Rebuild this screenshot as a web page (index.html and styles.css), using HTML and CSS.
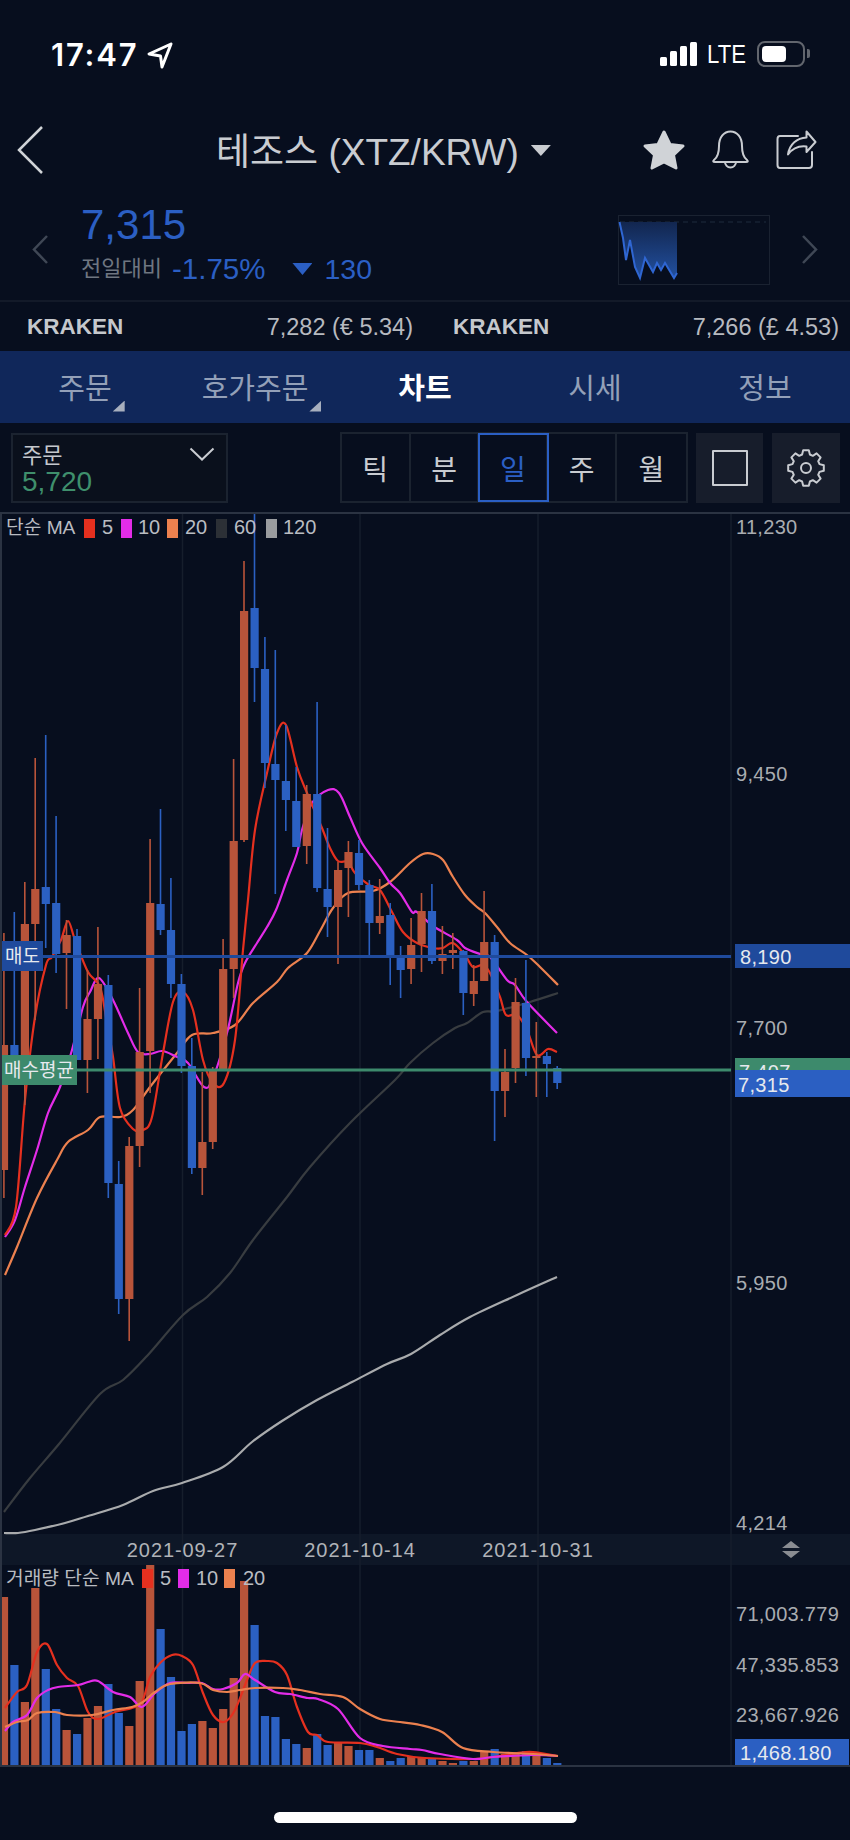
FILE: index.html
```html
<!DOCTYPE html>
<html lang="ko">
<head>
    <meta charset="UTF-8">
    <meta name="viewport" content="width=device-width, initial-scale=1.0">
    <title>테조스 (XTZ/KRW)</title>
    <link rel="stylesheet" href="styles.css">
</head>
<body>
    <!-- Status bar -->
    <div class="status">
        <span class="clock">17:47</span>
        <svg class="loc" width="28" height="28" viewBox="0 0 28 28"><path d="M25 3 L3 13 L14.500 15 L16 26 Z"/></svg>
        <svg class="signal" width="37" height="24" viewBox="0 0 37 24">
            <rect x="0" y="15" width="7" height="9" rx="1.500"/>
            <rect x="10" y="9" width="7" height="15" rx="1.500"/>
            <rect x="20" y="4" width="7" height="20" rx="1.500"/>
            <rect x="30" y="0" width="7" height="24" rx="1.500"/>
        </svg>
        <span class="net">LTE</span>
        <div class="battery"><div class="battery-level"></div></div>
        <div class="battery-cap"></div>
    </div>

    <!-- Title with favourite, alert and share actions -->
    <header class="title-row">
        <svg class="back" width="26" height="48" viewBox="0 0 26 48"><path d="M25 1 L2 24 L25 47"/></svg>
        <h1 class="title">테조스 (XTZ/KRW)</h1>
        <span class="caret"></span>
        <div class="actions">
            <svg width="44" height="42" viewBox="0 0 44 42"><path class="star" d="M22 3 L28 15.500 L41 17 L31.500 26 L34 39 L22 33 L10 39 L12.500 26 L3 17 L16 15.500 Z"/></svg>
            <svg width="40" height="40" viewBox="0 0 40 40"><path class="outline" d="M3 30 C7 27 8 22 8 16 C8 7 13 1.500 19.500 1.500 C26 1.500 31 7 31 16 C31 22 32 27 36 30 Q38 32 35 32 H4 Q1 32 3 30 Z M14 32 A5.500 5.500 0 0 0 25 32"/></svg>
            <svg width="41" height="40" viewBox="0 0 41 40"><path class="outline" d="M22 6 H4 Q1.500 6 1.500 9 V35 Q1.500 38 4 38 H33 Q36 38 36 35 V22 M30.500 1.500 L39.500 12 L30.500 22 V16.500 C22 15.500 16 19 12 24.500 C13.500 14 21 8 30.500 7.500 Z"/></svg>
        </div>
    </header>

    <!-- Current price and the day's sparkline -->
    <section class="price-row">
        <svg class="pager" width="17" height="29" viewBox="0 0 17 29"><path d="M15 1 L2 14.500 L15 28"/></svg>
        <div class="price-info">
            <div class="price">7,315</div>
            <div class="change">
                <span class="change-label">전일대비</span>
                <span class="change-rate">-1.75%</span>
                <span class="change-arrow"></span>
                <span class="change-amount">130</span>
            </div>
        </div>
        <svg class="spark" width="152" height="70" viewBox="618 215 152 70">
            <defs>
                <linearGradient id="sparkFill" x1="0" y1="0" x2="0" y2="1">
                    <stop offset="0" stop-color="#12264f"/>
                    <stop offset="1" stop-color="#22509f"/>
                </linearGradient>
            </defs>
            <rect class="spark-box" x="618.500" y="215.500" width="151" height="69"/>
            <line class="spark-open" x1="620" y1="222" x2="766" y2="222"/>
            <path fill="url(#sparkFill)" d="M619.500 222 H677 V273 L674 278 L665 263 L661 270 L657 263 L653 272 L645 258 L640 278 L635 267 L630 240 L626 260 L623 238 Z"/>
            <polyline class="spark-line" points="619.500,222 623,238 626,260 630,240 635,267 640,278 645,258 653,272 657,263 661,270 665,263 674,278 677,273"/>
        </svg>
        <svg class="pager pager-next" width="17" height="29" viewBox="0 0 17 29"><path d="M2 1 L15 14.500 L2 28"/></svg>
    </section>

    <!-- Prices on other exchanges -->
    <section class="exchange-row">
        <div class="exchange"><b>KRAKEN</b><span>7,282 (€ 5.34)</span></div>
        <div class="exchange"><b>KRAKEN</b><span>7,266 (£ 4.53)</span></div>
    </section>

    <nav class="tabs">
        <a class="tab"><span class="has-menu">주문</span></a>
        <a class="tab"><span class="has-menu">호가주문</span></a>
        <a class="tab tab-active">차트</a>
        <a class="tab">시세</a>
        <a class="tab">정보</a>
    </nav>

    <!-- Order picker, period switch and chart tools -->
    <section class="controls">
        <div class="order-picker">
            <div class="order-label">주문</div>
            <div class="order-price">5,720</div>
            <svg class="order-chevron" width="26" height="14" viewBox="0 0 26 14"><path d="M1.500 1.500 L13 12.500 L24.500 1.500"/></svg>
        </div>
        <div class="periods">
            <button class="period">틱</button>
            <button class="period">분</button>
            <button class="period period-active">일</button>
            <button class="period">주</button>
            <button class="period">월</button>
        </div>
        <button class="tool">
            <svg width="36" height="36" viewBox="0 0 36 36"><rect class="outline" x="1" y="1" width="34" height="34"/></svg>
        </button>
        <button class="tool">
            <svg width="40" height="40" viewBox="-20 -20 40 40">
                <path class="outline" d="M-2.800 -17.800 L2.800 -17.800 L3.900 -13.500 L6.800 -12.200 L10.600 -14.600 L14.600 -10.600 L12.200 -6.800 L13.500 -3.900 L17.800 -2.800 L17.800 2.800 L13.500 3.900 L12.200 6.800 L14.600 10.600 L10.600 14.600 L6.800 12.200 L3.900 13.500 L2.800 17.800 L-2.800 17.800 L-3.900 13.500 L-6.800 12.200 L-10.600 14.600 L-14.600 10.600 L-12.200 6.800 L-13.500 3.900 L-17.800 2.800 L-17.800 -2.800 L-13.500 -3.900 L-12.200 -6.800 L-14.600 -10.600 L-10.600 -14.600 L-6.800 -12.200 L-3.900 -13.500 Z"/>
                <circle class="outline" r="5"/>
            </svg>
        </button>
    </section>

    <!-- Candles and volume, filled in by chart.js -->
    <svg id="chart" class="chart" width="850" height="1255" viewBox="0 512 850 1255"></svg>

    <div class="home-area"><div class="home-bar"></div></div>

    <script src="chart.js"></script>
</body>
</html>
```

FILE: styles.css
```css
* {
    box-sizing: border-box;
}

body {
    margin: 0;
    width: 850px;
    height: 1840px;
    overflow: hidden;
    background: #070e1e;
    color: #c9ccd1;
    font-family: "Liberation Sans", "Noto Sans CJK KR", sans-serif;
}

svg {
    display: block;
}

.outline {
    fill: none;
    stroke: #c9ccd1;
    stroke-width: 2;
    stroke-linejoin: round;
    stroke-linecap: round;
}

/* Status bar */
.status {
    height: 110px;
    padding: 41px 40px 0 51px;
    display: flex;
    align-items: flex-start;
    color: #fff;
}

.clock {
    font-family: "Inter", sans-serif;
    font-size: 31px;
    font-weight: 600;
    letter-spacing: 1.800px;
    line-height: 27px;
}

.loc {
    margin-left: 8px;
}

.loc path {
    fill: none;
    stroke: #fff;
    stroke-width: 3;
    stroke-linejoin: round;
}

.signal {
    margin-left: auto;
    margin-top: 1px;
    fill: #fff;
}

.net {
    margin-left: 10px;
    margin-right: 10px;
    font-size: 26px;
    line-height: 26px;
    transform: scaleX(0.85);
    transform-origin: left;
    width: 40px;
}

.battery {
    width: 48px;
    height: 26px;
    padding: 3px;
    border: 2px solid #62666e;
    border-radius: 8px;
}

.battery-level {
    width: 24px;
    height: 16px;
    background: #fff;
    border-radius: 4px;
}

.battery-cap {
    width: 3px;
    height: 9px;
    margin: 8px 0 0 2px;
    background: #62666e;
    border-radius: 0 2px 2px 0;
}

/* Title row */
.title-row {
    height: 80px;
    padding-left: 17px;
    padding-right: 33px;
    display: flex;
    align-items: center;
}

.back path {
    fill: none;
    stroke: #d0d3d7;
    stroke-width: 2.500;
}

.title {
    margin: -3px 0 0 173px;
    font-size: 37px;
    font-weight: 400;
    white-space: nowrap;
    color: #c9ccd1;
}

.caret {
    width: 20px;
    height: 11px;
    margin-left: 12px;
    margin-top: 1px;
    background: #c9ccd1;
    clip-path: polygon(0 0, 100% 0, 50% 100%);
}

.actions {
    margin-left: auto;
    display: flex;
    align-items: center;
    gap: 25px;
}

.star {
    fill: #d0d3d7;
    stroke: #d0d3d7;
    stroke-width: 3;
    stroke-linejoin: round;
}

/* Price row */
.price-row {
    height: 112px;
    padding: 0 32px 0 32px;
    display: flex;
    align-items: center;
    border-bottom: 2px solid #131a29;
}

.pager {
    margin-top: 8px;
}

.pager path {
    fill: none;
    stroke: #3f4755;
    stroke-width: 2.500;
}

.pager-next {
    margin-left: 31px;
}

.price-info {
    margin-left: 32px;
    margin-top: -2px;
}

.price {
    font-size: 42px;
    line-height: 42px;
    color: #2b5fc4;
}

.change {
    margin-top: 8px;
    display: flex;
    align-items: center;
    font-size: 28.500px;
    line-height: 30px;
    color: #2b5fc4;
}

.change-label {
    font-size: 22px;
    color: #6f7681;
    margin-right: 10px;
}

.change-rate {
    font-size: 29.500px;
}

.change-arrow {
    width: 20px;
    height: 12px;
    margin: 0 12px 0 27px;
    background: #2b5fc4;
    clip-path: polygon(0 0, 100% 0, 50% 100%);
}

.spark {
    margin-left: auto;
    margin-top: 9px;
}

.spark-box {
    fill: none;
    stroke: #1a2231;
}

.spark-open {
    stroke: #1f2a3c;
    stroke-dasharray: 5 4;
}

.spark-line {
    fill: none;
    stroke: #2f66d2;
    stroke-width: 2;
}

/* Other exchanges */
.exchange-row {
    height: 49px;
    padding: 2px 11px 0 27px;
    display: grid;
    grid-template-columns: 386px 1fr;
    align-items: center;
}

.exchange {
    display: flex;
    justify-content: space-between;
    font-size: 23.500px;
    color: #b7bac0;
}

.exchange + .exchange {
    margin-left: 40px;
}

.exchange b {
    font-size: 22.500px;
    color: #c5c8cd;
}

/* Tabs */
.tabs {
    height: 72px;
    display: grid;
    grid-template-columns: repeat(5, 1fr);
    background: #10275a;
}

.tab {
    display: flex;
    align-items: center;
    justify-content: center;
    padding-bottom: 3px;
    font-size: 29px;
    color: #93a0b8;
}

.tab-active {
    color: #fff;
    font-weight: 700;
}

.has-menu {
    position: relative;
}

.has-menu::after {
    content: "";
    position: absolute;
    right: -13px;
    bottom: -5px;
    width: 12px;
    height: 11px;
    background: #a7afbe;
    clip-path: polygon(100% 0, 100% 100%, 0 100%);
}

/* Controls */
.controls {
    height: 89px;
    padding: 10px 10px 0 11px;
    display: flex;
    align-items: flex-start;
}

.order-picker {
    position: relative;
    width: 218px;
    height: 70px;
    padding: 8px 9px;
    border: 2px solid #1b2330;
    background: #0a101c;
}

.order-label {
    font-size: 22px;
    line-height: 25px;
    color: #c5c8cd;
}

.order-price {
    font-size: 28px;
    line-height: 28px;
    color: #3f8f6c;
}

.order-chevron {
    position: absolute;
    right: 11px;
    top: 12px;
}

.order-chevron path {
    fill: none;
    stroke: #c9ccd1;
    stroke-width: 2;
}

.periods {
    margin-left: 112px;
    margin-top: -1px;
    display: flex;
    height: 71px;
    border: 2px solid #1b2330;
}

.period {
    width: 68.800px;
    padding: 0;
    border: 0;
    border-right: 2px solid #1b2330;
    background: none;
    color: #c9ccd1;
    font-family: inherit;
    font-size: 28px;
}

.period:last-child {
    border-right: 0;
}

.period-active {
    color: #2b5fc4;
    outline: 2px solid #2b5fc4;
    outline-offset: -1px;
}

.tool {
    width: 68px;
    height: 70px;
    padding: 0;
    margin-left: 9px;
    border: 0;
    background: #171d2b;
    display: flex;
    align-items: center;
    justify-content: center;
}

.periods + .tool {
    margin-left: 8px;
}

/* Chart */
.grid-line {
    stroke: #161e2c;
    stroke-width: 1.500;
}

.frame {
    fill: #2b3342;
}

.date-strip {
    fill: #0e1727;
}

.candle-up {
    fill: #b8543a;
}

.candle-down {
    fill: #2b60c2;
}

.ma {
    fill: none;
    stroke-width: 2.200;
    stroke-linejoin: round;
}

.ma5 { stroke: #e5301f; }
.ma10 { stroke: #e32ce8; }
.ma20 { stroke: #ec814f; }
.ma60 { stroke: #383c40; }
.ma120 { stroke: #a9abad; }

.chip-5 { fill: #e5301f; }
.chip-10 { fill: #e32ce8; }
.chip-20 { fill: #ec814f; }
.chip-60 { fill: #2c3036; }
.chip-120 { fill: #9a9c9f; }

.chart text {
    font-family: "Liberation Sans", "Noto Sans CJK KR", sans-serif;
    font-size: 20px;
    letter-spacing: 0.300px;
    fill: #a9acb1;
}

.chart .legend {
    fill: #b9bcc2;
    font-size: 20px;
    letter-spacing: 0;
}

.chart .legend-title {
    fill: #b9bcc2;
    font-size: 19.200px;
    letter-spacing: 0;
}

.chart .date {
    fill: #b0b3b8;
    text-anchor: middle;
    letter-spacing: 0.900px;
}

.chart .tag-text {
    fill: #e6e9ee;
    font-size: 20px;
}

.chart .tag-name {
    fill: #e6e9ee;
    font-size: 19px;
    letter-spacing: 0;
}

.sell-line, .sell-tag { fill: #1f4a9c; }
.avg-line, .avg-tag { fill: #3d8a6c; }
.last-tag { fill: #2b5fc2; }

.scale-arrow {
    fill: #8a8d92;
}

/* Home indicator */
.home-area {
    padding-top: 45px;
    display: flex;
    justify-content: center;
}

.home-bar {
    width: 303px;
    height: 11px;
    margin-left: 1px;
    background: #fff;
    border-radius: 6px;
}
```

FILE: chart.js
```js
// Daily candles: [wick top, body top, body bottom, wick bottom, rising?]
const candles = [
    [933, 1045, 1170, 1198, 1], [912, 1045, 1075, 1075, 0], [882, 924, 1070, 1105, 1],
    [758, 889, 924, 1020, 1], [735, 887, 904, 948, 0], [816, 903, 954, 973, 0],
    [920, 935, 953, 1009, 1], [929, 936, 1060, 1060, 0], [970, 1019, 1060, 1093, 1],
    [927, 984, 1019, 1059, 1], [975, 985, 1183, 1198, 0], [1161, 1184, 1299, 1314, 0],
    [1137, 1146, 1299, 1341, 1], [988, 1052, 1146, 1167, 1], [839, 903, 1051, 1093, 1],
    [809, 904, 930, 935, 0], [878, 930, 984, 998, 0], [974, 984, 1066, 1073, 0],
    [1038, 1066, 1168, 1174, 0], [1072, 1142, 1168, 1195, 1], [1067, 1070, 1142, 1149, 1],
    [939, 969, 1070, 1070, 1], [759, 841, 969, 998, 1], [561, 611, 840, 842, 1],
    [514, 608, 668, 702, 0], [637, 669, 763, 788, 0], [650, 764, 780, 894, 0],
    [725, 781, 800, 831, 0], [767, 801, 847, 847, 0], [785, 794, 846, 864, 1],
    [702, 794, 888, 892, 0], [828, 889, 907, 937, 0], [862, 870, 907, 964, 1],
    [841, 852, 868, 917, 1], [840, 853, 885, 890, 0], [880, 885, 923, 955, 0],
    [879, 916, 923, 934, 1], [903, 915, 956, 985, 0], [946, 958, 970, 998, 0],
    [918, 945, 969, 984, 1], [893, 911, 944, 972, 1], [884, 911, 961, 964, 0],
    [926, 954, 961, 974, 1], [933, 950, 953, 969, 1], [950, 951, 993, 1015, 0],
    [965, 981, 994, 1006, 1], [891, 942, 981, 981, 1], [935, 942, 1091, 1141, 0],
    [1049, 1072, 1091, 1117, 1], [978, 1002, 1068, 1083, 1], [960, 1003, 1058, 1076, 0],
    [1022, 1056, 1058, 1097, 1], [1052, 1056, 1064, 1097, 0], [1066, 1068, 1083, 1089, 0]
];

// Top edge of each volume bar; colour follows the candle of the same day
const volumes = [
    1597, 1665, 1702, 1588, 1669, 1709, 1730, 1734, 1718, 1706, 1684, 1713, 1726, 1681,
    1565, 1629, 1677, 1731, 1724, 1721, 1728, 1709, 1678, 1581, 1625, 1716, 1717, 1739,
    1744, 1748, 1734, 1745, 1743, 1746, 1750, 1750, 1758, 1761, 1758, 1757, 1758, 1758,
    1761, 1763, 1761, 1761, 1752, 1749, 1754, 1754, 1751, 1752, 1758, 1763
];

// Moving averages in chart coordinates
const priceLines = {
    ma120: "4,1533 18,1533 35,1530 65,1523 88,1516 123,1505 153,1491 182,1483 223,1467 252,1442 282,1421 317,1400 352,1382 387,1364 411,1354 440,1335 470,1317 517,1295 557,1277",
    ma60: "4,1512 30,1478 59,1444 100,1394 123,1380 147,1356 183,1315 207,1297 230,1273 253,1240 287,1197 310,1167 350,1123 395,1080 410,1063 433,1043 455,1028 467,1023 483,1012 497,1011 530,1002 558,993",
    ma20: "5,1275 17,1247 37,1198 57,1160 68,1142 88,1130 100,1117 120,1117 133,1110 150,1087 177,1053 192,1035 213,1033 235,1025 253,1003 277,982 288,968 307,953 320,931 333,908 348,893 373,891 390,882 410,863 423,854 433,854 443,860 453,877 465,895 477,907 485,913 497,927 510,943 527,955 540,967 558,985",
    ma10: "5,1237 15,1220 25,1187 37,1150 48,1113 60,1087 72,1050 83,1007 90,992 99,978 113,1000 128,1033 138,1052 150,1054 162,1051 175,1056 188,1063 204,1087 213,1078 227,1033 238,983 245,963 257,943 267,927 276,910 287,880 297,853 302,830 312,803 328,790 339,793 350,817 362,843 380,868 390,883 400,893 412,912 417,912 433,926 457,940 465,948 480,954 490,957 507,980 515,985 527,1002 557,1033",
    ma5: "5,1235 16,1207 25,1100 35,1017 46,965 52,957 61,940 68,921 75,940 88,972 100,987 107,1023 113,1057 120,1108 133,1129 143,1130 152,1117 163,1053 173,1002 183,992 193,1010 203,1060 213,1083 224,1083 235,1040 243,950 248,900 255,830 267,773 277,733 286,725 297,767 307,793 322,828 330,848 338,861 348,862 355,873 369,885 380,890 392,912 403,932 417,943 433,948 443,948 453,943 465,955 473,967 483,965 490,973 500,997 506,1015 517,1015 527,1030 537,1055 548,1049 557,1052"
};

const volumeLines = {
    ma5: "5,1708 17,1692 27,1685 37,1652 47,1644 57,1665 67,1678 78,1686 88,1712 98,1719 115,1712 132,1708 142,1702 150,1677 160,1663 172,1655 182,1656 193,1665 203,1693 213,1715 224,1722 235,1710 247,1680 255,1663 267,1661 277,1663 287,1675 297,1707 308,1732 317,1735 328,1742 360,1743 377,1747 397,1754 425,1758 473,1759 493,1757 517,1753 533,1752 558,1756",
    ma10: "5,1731 13,1722 27,1715 37,1698 48,1690 58,1687 78,1685 88,1682 98,1681 113,1692 130,1697 142,1707 155,1693 170,1683 187,1683 202,1683 213,1689 223,1689 237,1683 245,1674 255,1680 275,1692 290,1694 308,1698 318,1699 338,1709 360,1738 383,1746 410,1749 422,1750 440,1754 473,1759 493,1757 533,1755 558,1756",
    ma20: "5,1727 17,1722 28,1720 37,1713 55,1712 67,1715 92,1715 113,1710 132,1707 143,1702 155,1692 170,1684 200,1683 213,1690 227,1692 240,1690 255,1688 283,1688 300,1690 320,1694 343,1697 360,1709 380,1719 400,1722 420,1725 442,1732 463,1748 493,1752 533,1754 558,1756"
};

const legend = [
    { chip: "5", x: 84, label: 102 }, { chip: "10", x: 121, label: 138 },
    { chip: "20", x: 167, label: 185 }, { chip: "60", x: 216, label: 234 },
    { chip: "120", x: 266, label: 283 }
];
const volumeLegend = [
    { chip: "5", x: 142, label: 160 }, { chip: "10", x: 178, label: 196 },
    { chip: "20", x: 224, label: 243 }
];

const candleX = (i) => 3.9 + 10.44 * i;
const rect = (cls, x, y, w, h) => `<rect class="${cls}" x="${x}" y="${y}" width="${w}" height="${h}"/>`;
const text = (cls, x, y, str) => `<text class="${cls}" x="${x}" y="${y}">${str}</text>`;

// Catmull-Rom through the sampled points, so the averages bend instead of kink
function line(cls, points) {
    const p = points.split(" ").map((s) => s.split(",").map(Number));
    let d = "M" + p[0].join(" ");
    for (let i = 0; i < p.length - 1; i++) {
        const a = p[i - 1] || p[i];
        const b = p[i];
        const c = p[i + 1];
        const e = p[i + 2] || c;
        const c1 = [b[0] + (c[0] - a[0]) / 6, b[1] + (c[1] - a[1]) / 6];
        const c2 = [c[0] - (e[0] - b[0]) / 6, c[1] - (e[1] - b[1]) / 6];
        d += ` C${c1[0].toFixed(1)} ${c1[1].toFixed(1)} ${c2[0].toFixed(1)} ${c2[1].toFixed(1)} ${c[0]} ${c[1]}`;
    }
    return `<path class="ma ${cls}" d="${d}"/>`;
}

let out = "";

// Backgrounds and grid
out += rect("date-strip", 0, 1534, 850, 31);
[182.5, 360, 538, 731].forEach((x) => {
    out += `<line class="grid-line" x1="${x}" y1="514" x2="${x}" y2="1765"/>`;
});

// Price panel, lines sit under the candles
Object.keys(priceLines).forEach((k) => { out += line(k, priceLines[k]); });

candles.forEach((c, i) => {
    const x = candleX(i);
    const cls = c[4] ? "candle-up" : "candle-down";
    const left = Math.max(2, x - 4);
    out += rect(cls, (x - 0.8).toFixed(1), c[0], 1.6, c[3] - c[0]);
    out += rect(cls, left.toFixed(1), c[1], (x + 4.2 - left).toFixed(1), Math.max(c[2] - c[1], 2));
});

// Sell and average-price levels
out += rect("sell-line", 0, 955, 731, 3);
out += rect("avg-line", 0, 1068.5, 731, 3);
out += rect("sell-tag", 2, 941, 41, 30);
out += text("tag-name", 5, 963, "매도");
out += rect("avg-tag", 2, 1055, 75, 30);
out += text("tag-name", 4, 1077, "매수평균");

// Price axis
out += text("axis", 736, 534, "11,230");
out += text("axis", 736, 781, "9,450");
out += text("axis", 736, 1035, "7,700");
out += text("axis", 736, 1290, "5,950");
out += text("axis", 736, 1530, "4,214");
out += rect("sell-tag", 735, 944, 115, 24);
out += text("tag-text", 740, 964, "8,190");
out += rect("avg-tag", 735, 1058, 115, 14);
out += text("tag-text", 739, 1079, "7,407");
out += rect("last-tag", 735, 1070, 115, 27);
out += text("tag-text", 738, 1092, "7,315");

// Price legend
out += text("legend-title", 6, 534, "단순 MA");
legend.forEach((l) => {
    out += rect("chip-" + l.chip, l.x, 519, 11, 19);
    out += text("legend", l.label, 534, l.chip);
});

// Date axis
out += text("date", 182.5, 1557, "2021-09-27");
out += text("date", 360, 1557, "2021-10-14");
out += text("date", 538, 1557, "2021-10-31");
out += '<path class="scale-arrow" d="M791 1541 L800 1548 H782 Z M782 1551 H800 L791 1558 Z"/>';

// Volume bars and their averages
volumes.forEach((top, i) => {
    const x = candleX(i);
    const left = Math.max(2, x - 4);
    const cls = candles[i][4] ? "candle-up" : "candle-down";
    out += rect(cls, left.toFixed(1), top, (x + 4.2 - left).toFixed(1), 1765 - top);
});
Object.keys(volumeLines).forEach((k) => { out += line(k, volumeLines[k]); });

// Volume legend and axis
out += text("legend-title", 6, 1585, "거래량 단순 MA");
volumeLegend.forEach((l) => {
    out += rect("chip-" + l.chip, l.x, 1569, 11, 19);
    out += text("legend", l.label, 1585, l.chip);
});
out += text("axis", 736, 1621, "71,003.779");
out += text("axis", 736, 1672, "47,335.853");
out += text("axis", 736, 1722, "23,667.926");
out += rect("last-tag", 735, 1739, 114, 26);
out += text("tag-text", 740, 1760, "1,468.180");

// Panel frame
out += rect("frame", 0, 512, 850, 2);
out += rect("frame", 0, 512, 2, 1255);
out += rect("frame", 0, 1765, 850, 2);

document.getElementById("chart").innerHTML = out;
```
